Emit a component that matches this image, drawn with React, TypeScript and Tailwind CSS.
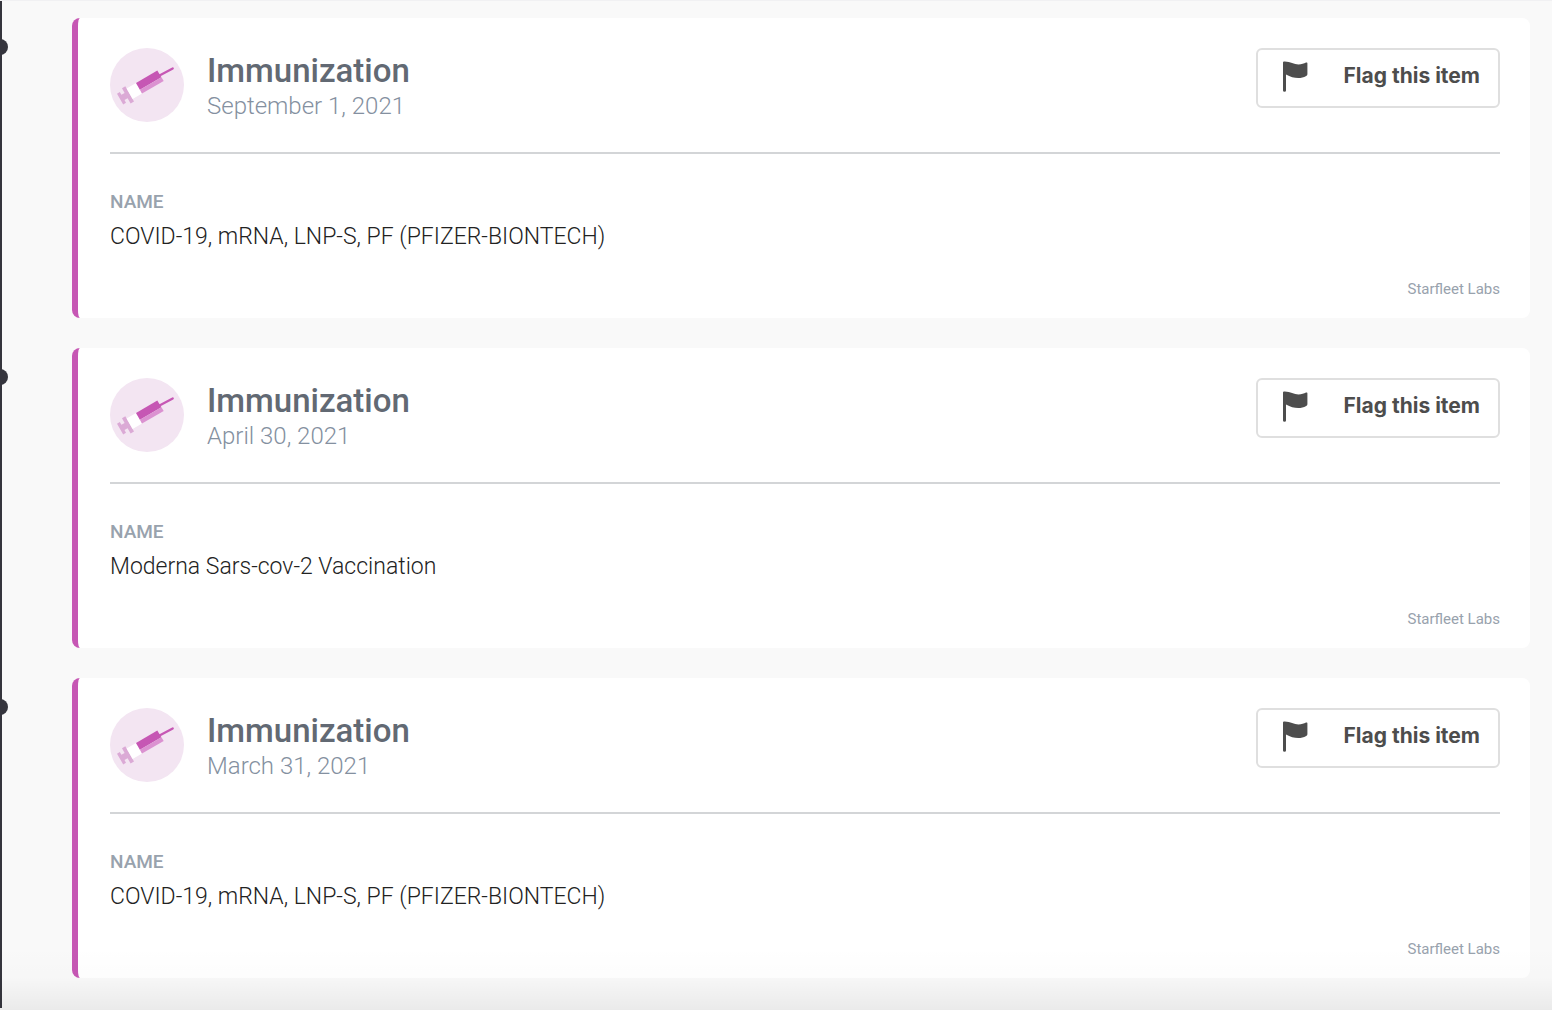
type Item = { id: string; title: string; date: string; name: string; source: string };

const items: Item[] = [
  { id: 'imm-1', title: 'Immunization', date: 'September 1, 2021', name: 'COVID-19, mRNA, LNP-S, PF (PFIZER-BIONTECH)', source: 'Starfleet Labs' },
  { id: 'imm-2', title: 'Immunization', date: 'April 30, 2021', name: 'Moderna Sars-cov-2 Vaccination', source: 'Starfleet Labs' },
  { id: 'imm-3', title: 'Immunization', date: 'March 31, 2021', name: 'COVID-19, mRNA, LNP-S, PF (PFIZER-BIONTECH)', source: 'Starfleet Labs' },
];

function SyringeIcon() {
  return (
    <svg viewBox="0 0 74 74" className="h-[74px] w-[74px] shrink-0" aria-hidden>
      <circle cx="37" cy="37" r="37" fill="#f3e5f2" />
      {/* plunger */}
      <path d="M12 40.2 15.3 38.3 24 53.4 20.6 55.4 17.6 50.2 14.5 52 16 54.8 13.2 56.4 7 45.7 9.8 44.1 11.4 46.8 14.6 44.9Z" fill="#dbaad6" />
      {/* barrel */}
      <path d="M16.6 40.5 26 35 32 45.5 22.6 51Z" fill="#fff" />
      <path d="M26 35 47.3 22.5 51.4 29.3 29.9 41.8Z" fill="#c657b4" />
      <path d="M29.9 41.8 51.4 29.3 53.7 33 32 45.6Z" fill="#db92d1" />
      {/* needle */}
      <path d="M49.5 27.6 62.7 20.4" stroke="#c657b4" strokeWidth="2.3" strokeLinecap="round" />
    </svg>
  );
}

function FlagIcon() {
  return (
    <svg viewBox="0 0 26 31" className="h-[31px] w-[26px] fill-current" aria-hidden>
      <path d="M1 1.6Q1 .5 2 .5C8 .2 12 3.4 16.5 3.4 19.5 3.4 22 2.6 24 1.6Q25.4 1 25.4 2.2V13.3Q25.4 14.4 24.2 15C18 18.4 11 17.2 4 13.4V29.4Q4 30.8 2.5 30.8 1 30.8 1 29.4Z" />
    </svg>
  );
}

function Card({ item }: { item: Item }) {
  return (
    <article className="rounded-lg border-l-[6px] border-[#c657b4] bg-white pt-[30px] pr-[30px] pb-5 pl-8">
      <header className="flex items-start justify-between border-b-2 border-[#d3d5d7] pb-[30px]">
        <div className="flex gap-[23px]">
          <SyringeIcon />
          <div>
            <h2 className="text-[33px] leading-[46px] font-medium text-[#626973]">{item.title}</h2>
            <p className="text-2xl leading-6 font-light text-[#8490a0]">{item.date}</p>
          </div>
        </div>
        <button type="button" className="flex h-[60px] min-w-[244px] items-center justify-between gap-6 rounded-md border-2 border-[#dfdfdf] pr-[18px] pb-1 pl-6 font-[Inter,sans-serif] text-[21px] font-bold text-[#4d4d4d]">
          <FlagIcon />
          Flag this item
        </button>
      </header>
      <dl className="pt-8">
        <dt className="text-[19px] leading-8 font-medium text-[#98a2ad]">NAME</dt>
        <dd className="text-[23px] leading-[38px] font-light text-[#222]">{item.name}</dd>
      </dl>
      <p className="pt-6 text-right text-[15px] leading-[18px] text-[#98a2ad]">{item.source}</p>
    </article>
  );
}

export default function App() {
  return (
    <main className="relative min-h-screen overflow-hidden border-t border-[#f1f1f3] bg-[#f9f9f9] pb-0.5 font-[Roboto,sans-serif]">
      <ol className="flex flex-col gap-[30px] border-l-2 border-[#35353d] pt-[17px] pr-[22px] pb-[30px] pl-[70px]">
        {items.map((item) => (
          <li key={item.id} className="relative">
            <span className="absolute top-[21px] -left-20 h-4 w-4 rounded-full bg-[#35353d]" />
            <Card item={item} />
          </li>
        ))}
      </ol>
      {/* fade along the bottom edge */}
      <div className="pointer-events-none absolute inset-x-0 bottom-0 h-16 bg-linear-to-b from-transparent via-black/1 to-black/6" />
    </main>
  );
}
